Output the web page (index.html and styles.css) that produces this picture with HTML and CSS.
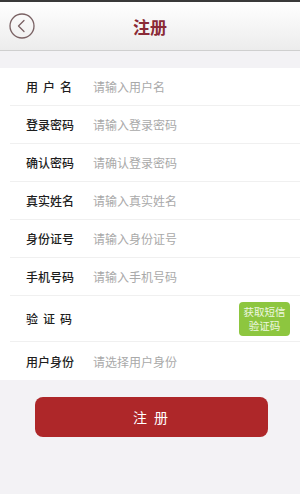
FILE: index.html
```html
<!DOCTYPE html>
<html lang="zh-CN">
<head>
    <meta charset="UTF-8">
    <meta name="viewport" content="width=device-width, initial-scale=1.0">
    <title>注册</title>
    <link rel="stylesheet" href="styles.css">
</head>
<body>
    <div class="header">
        <a class="back" href="#">
            <svg width="26" height="26" viewBox="0 0 26 26">
                <circle cx="13" cy="13" r="12" fill="none" stroke="#7a6264" stroke-width="1.3"/>
                <path d="M15 7.5 L9.5 13 L15 18.5" fill="none" stroke="#7a6264" stroke-width="1.3" stroke-linecap="round" stroke-linejoin="round"/>
            </svg>
        </a>
        <h1>注册</h1>
    </div>

    <form class="form">
        <div class="row">
            <label class="spaced">用户名</label>
            <input type="text" placeholder="请输入用户名">
        </div>
        <div class="row">
            <label>登录密码</label>
            <input type="password" placeholder="请输入登录密码">
        </div>
        <div class="row">
            <label>确认密码</label>
            <input type="password" placeholder="请确认登录密码">
        </div>
        <div class="row">
            <label>真实姓名</label>
            <input type="text" placeholder="请输入真实姓名">
        </div>
        <div class="row">
            <label>身份证号</label>
            <input type="text" placeholder="请输入身份证号">
        </div>
        <div class="row">
            <label>手机号码</label>
            <input type="text" placeholder="请输入手机号码">
        </div>
        <div class="row row-code">
            <label class="spaced">验证码</label>
            <input type="text">
            <button type="button" class="code-btn">获取短信<br>验证码</button>
        </div>
        <div class="row">
            <label>用户身份</label>
            <input type="text" placeholder="请选择用户身份">
        </div>
    </form>

    <button type="button" class="submit">注 册</button>
</body>
</html>
```

FILE: styles.css
```css
body {
    margin: 0;
    background-color: #f3f2f5;
    font-family: "Noto Sans CJK SC", "Noto Sans", sans-serif;
    color: #333;
    border-top: 2px solid #3a3a3a;
    min-height: 492px;
}

.header {
    height: 48px;
    display: flex;
    align-items: center;
    justify-content: center;
    position: relative;
    background: linear-gradient(#ffffff, #ececec);
    border-bottom: 1px solid #cfcfcf;
}

.back {
    position: absolute;
    left: 9px;
    top: 11px;
    width: 26px;
    height: 26px;
}

.header h1 {
    margin: 0;
    font-size: 17px;
    font-weight: bold;
    color: #8a2a36;
}

.form {
    margin-top: 17px;
    background-color: #fff;
}

.row {
    box-sizing: border-box;
    height: 38px;
    display: flex;
    align-items: center;
    margin-left: 10px;
    padding-left: 16px;
    border-bottom: 1px solid #f0f0f0;
}

.row:last-child {
    border-bottom: none;
}

.row label {
    width: 48px;
    margin-right: 19px;
    font-size: 12px;
    font-weight: 500;
    color: #1e1e1e;
    white-space: nowrap;
}

.row label.spaced {
    letter-spacing: 5px;
}

.row input {
    flex-grow: 1;
    min-width: 0;
    border: none;
    outline: none;
    padding: 0;
    font-family: inherit;
    font-size: 12px;
    color: #333;
    background: transparent;
}

.row input::placeholder {
    color: #a9a9a9;
}

.row-code {
    height: 46px;
}

.code-btn {
    width: 51px;
    height: 34px;
    margin-right: 10px;
    padding: 0;
    border: none;
    border-radius: 4px;
    background-color: #8dc63f;
    color: #eef7e0;
    font-family: inherit;
    font-size: 10.5px;
    line-height: 14px;
}

.submit {
    display: block;
    width: 233px;
    height: 40px;
    margin: 17px 0 0 35px;
    border: none;
    border-radius: 8px;
    background-color: #ae2729;
    color: #fff;
    font-family: inherit;
    font-size: 14px;
    letter-spacing: 2px;
}
```
